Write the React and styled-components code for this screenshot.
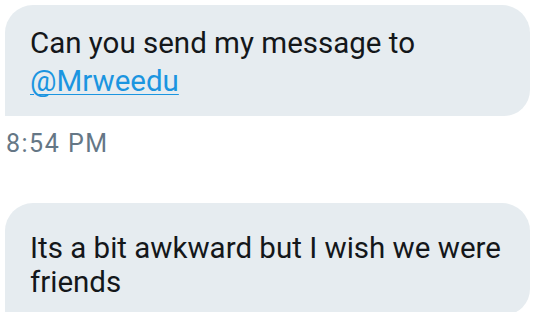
import styled, { createGlobalStyle } from "styled-components";

const GlobalStyle = createGlobalStyle`
  body {
    margin: 0;
    background: #ffffff;
    font-family: Roboto, "Noto Sans", sans-serif;
    overflow: hidden;
  }
`;

const Thread = styled.div`
  display: flex;
  flex-direction: column;
  align-items: flex-start;
  padding: 5px 4px 0 5px;
  height: 312px;
  box-sizing: border-box;
  overflow: hidden;
`;

const Bubble = styled.div`
  box-sizing: border-box;
  width: 525px;
  padding: ${(p) => p.$pad};
  background: #e6ecf0;
  border-radius: 28px 28px 26px 0;
  color: #14171a;
  font-size: 29.5px;
  line-height: ${(p) => p.$lead}px;
  flex-shrink: 0;
`;

const Mention = styled.a`
  color: #1b95e0;
  text-decoration: underline;
  text-underline-offset: 3px;
  text-decoration-thickness: 1px;
`;

const Time = styled.div`
  margin: 14px 0 0 1px;
  font-size: 25px;
  line-height: 28px;
  letter-spacing: 1.5px;
  color: #657786;
`;

const Gap = styled.div`
  height: 45px;
  flex-shrink: 0;
`;

export default function App() {
  return (
    <>
      <GlobalStyle />
      <Thread>
        <Bubble $pad="19px 20px 16px 25px" $lead={38}>
          Can you send my message to
          <br />
          <Mention href="#">@Mrweedu</Mention>
        </Bubble>
        <Time>8:54 PM</Time>
        <Gap />
        <Bubble $pad="28px 20px 16px 25px" $lead={34}>
          Its a bit awkward but I wish we were friends
        </Bubble>
      </Thread>
    </>
  );
}
